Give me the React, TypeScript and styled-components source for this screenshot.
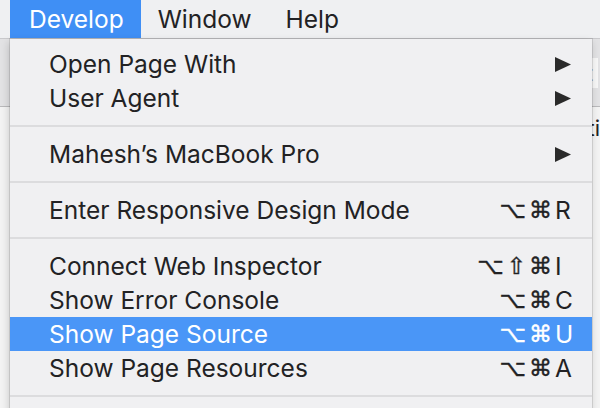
import React from "react";
import styled, { createGlobalStyle } from "styled-components";

const GlobalStyle = createGlobalStyle`
  html, body { margin: 0; padding: 0; }
  body {
    width: 600px;
    height: 408px;
    overflow: hidden;
    font-family: Inter, "Liberation Sans", Arial, sans-serif;
    -webkit-font-smoothing: antialiased;
  }
`;

const Screen = styled.div`
  position: relative;
  width: 600px;
  height: 408px;
  overflow: hidden;
  background: #ededed;
  display: flex;
  flex-direction: column;
`;

const MenuBar = styled.div`
  height: 38px;
  flex: none;
  display: flex;
  align-items: stretch;
  padding-left: 10px;
  background: #eff0f2;
  border-bottom: 1px solid #c9c9cc;
`;

const MenuTitle = styled.div<{ $active?: boolean }>`
  display: flex;
  align-items: center;
  padding: 0 17px 0 ${(p) => (p.$active ? "19px" : "17px")};
  font-size: 24.5px;
  color: ${(p) => (p.$active ? "#ffffff" : "#222224")};
  background: ${(p) => (p.$active ? "#3f8ff5" : "transparent")};
`;

const Toolbar = styled.div`
  height: 67px;
  flex: none;
  display: flex;
  justify-content: flex-end;
  align-items: center;
  background: #e2e2e4;
  border-bottom: 1px solid #b9b9bb;
  padding-right: 2px;
`;

const Field = styled.div`
  font-size: 22px;
  color: #a0a0a0;
  width: 12px;
  overflow: hidden;
  background: #f7f7f7;
  height: 30px;
  line-height: 30px;
`;

const Content = styled.div`
  flex: 1;
  background: #f3f3f3;
  display: flex;
  justify-content: flex-end;
  padding-top: 8px;
  font-size: 22px;
  color: #222;
`;

const Dropdown = styled.div`
  position: absolute;
  left: 10px;
  top: 39px;
  width: 582px;
  height: 380px;
  box-sizing: border-box;
  padding-top: 8px;
  background: #f0f0f2;
  box-shadow: 0 0 0 1px rgba(0, 0, 0, 0.1), -1px 3px 8px rgba(0, 0, 0, 0.18);
  display: flex;
  flex-direction: column;
`;

const Item = styled.div<{ $selected?: boolean }>`
  height: 34px;
  flex: none;
  display: flex;
  align-items: center;
  justify-content: space-between;
  padding: 0 17px 0 39px;
  font-size: 24.5px;
  color: ${(p) => (p.$selected ? "#ffffff" : "#222224")};
  background: ${(p) => (p.$selected ? "#4a96f7" : "transparent")};
`;

const Separator = styled.div`
  height: 22px;
  flex: none;
  display: flex;
  align-items: center;
  &::after {
    content: "";
    display: block;
    width: 100%;
    height: 2px;
    background: #dcdcde;
  }
`;

const Shortcut = styled.div`
  display: flex;
  align-items: center;
`;

const Modifiers = styled.span`
  display: flex;
  gap: 3px;
  font-family: "DejaVu Sans", sans-serif;
  font-size: 23px;
  -webkit-text-stroke: 0.4px currentColor;
`;

const Key = styled.span`
  width: 20px;
  margin-left: 3px;
  text-align: left;
`;

const Arrow = styled.svg`
  width: 16px;
  height: 15px;
  margin-right: 4px;
  display: block;
`;

type Entry =
  | { kind: "sep" }
  | { kind: "item"; label: string; submenu?: boolean; mods?: string[]; key?: string; selected?: boolean };

const entries: Entry[] = [
  { kind: "item", label: "Open Page With", submenu: true },
  { kind: "item", label: "User Agent", submenu: true },
  { kind: "sep" },
  { kind: "item", label: "Mahesh’s MacBook Pro", submenu: true },
  { kind: "sep" },
  { kind: "item", label: "Enter Responsive Design Mode", mods: ["⌥", "⌘"], key: "R" },
  { kind: "sep" },
  { kind: "item", label: "Connect Web Inspector", mods: ["⌥", "⇧", "⌘"], key: "I" },
  { kind: "item", label: "Show Error Console", mods: ["⌥", "⌘"], key: "C" },
  { kind: "item", label: "Show Page Source", mods: ["⌥", "⌘"], key: "U", selected: true },
  { kind: "item", label: "Show Page Resources", mods: ["⌥", "⌘"], key: "A" },
  { kind: "sep" },
];

export default function App() {
  return (
    <>
      <GlobalStyle />
      <Screen>
        <MenuBar>
          <MenuTitle $active>Develop</MenuTitle>
          <MenuTitle>Window</MenuTitle>
          <MenuTitle>Help</MenuTitle>
        </MenuBar>
        <Toolbar>
          <Field>t</Field>
        </Toolbar>
        <Content>ti</Content>
        <Dropdown>
          {entries.map((e, i) =>
            e.kind === "sep" ? (
              <Separator key={i} />
            ) : (
              <Item key={i} $selected={e.selected}>
                <span>{e.label}</span>
                {e.submenu ? (
                  <Arrow viewBox="0 0 16 15">
                    <polygon points="0,0 16,7.5 0,15" fill="#2a2a2a" />
                  </Arrow>
                ) : (
                  <Shortcut>
                    <Modifiers>
                      {e.mods?.map((m) => (
                        <span key={m}>{m}</span>
                      ))}
                    </Modifiers>
                    <Key>{e.key}</Key>
                  </Shortcut>
                )}
              </Item>
            )
          )}
        </Dropdown>
      </Screen>
    </>
  );
}
